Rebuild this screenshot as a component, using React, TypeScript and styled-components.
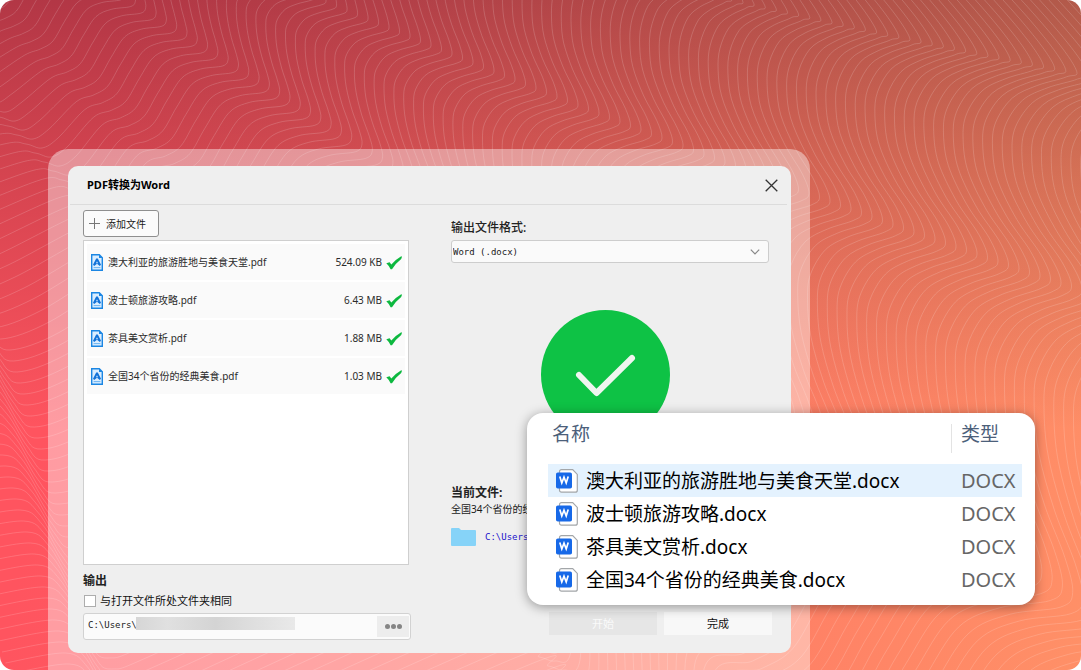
import React from 'react';
import styled, { createGlobalStyle, css } from 'styled-components';

const sans = `"Noto Sans", "Noto Sans CJK SC", sans-serif`;
const mono = `"DejaVu Sans Mono", "Noto Sans CJK SC", monospace`;

const GlobalStyle = createGlobalStyle`
  *, *::before, *::after { box-sizing: border-box; }
  body { margin: 0; background: #fff; font-family: ${sans}; color: #1a1a1a; }
  button, input, select { font: inherit; color: inherit; margin: 0; }
  h1, h2, p, ul { margin: 0; padding: 0; }
`;

const Stage = styled.main`
  position: relative;
  display: flex;
  min-height: 100vh;
  padding: 149px 271px 0 48px;
  border-radius: 14px;
  overflow: hidden;
  background:
    linear-gradient(180deg, rgba(36, 0, 22, 0.35) 0, rgba(36, 0, 16, 0.2) 165px, rgba(36, 0, 10, 0) 430px),
    linear-gradient(100deg, #ff545f 10%, #ff6062 32%, #ff7c65 68%, #ff9067 100%);
`;

const Waves = styled.svg`
  position: absolute;
  top: 0;
  left: 0;
  fill: none;
  stroke: #fff;
  stroke-opacity: 0.16;
`;

const Frame = styled.div`
  position: relative;
  flex: 1;
  padding: 17px 19px 17px 20px;
  border-radius: 20px 20px 0 0;
  background: rgba(255, 255, 255, 0.42);
`;

const Dialog = styled.section`
  border-radius: 10px;
  background: #efefef;
`;

const DialogHeader = styled.header`
  display: flex;
  align-items: center;
  justify-content: space-between;
  height: 39px;
  margin: 0 4px 0 2px;
  padding: 0 9px 0 17px;
  border-bottom: 1px solid #dcdcdc;
`;

const Title = styled.h1`
  font-size: 11px;
  line-height: 16px;
  font-weight: 700;
  color: #000;
`;

const IconButton = styled.button`
  display: flex;
  padding: 0;
  border: 0;
  background: none;
  color: #333;
`;

const DialogBody = styled.div`
  display: grid;
  grid-template-columns: 328px 1fr;
  column-gap: 40px;
  padding: 5px 19px 13px 15px;
`;

const Column = styled.div`
  display: flex;
  flex-direction: column;
`;

const AddButton = styled.button`
  display: flex;
  align-items: center;
  align-self: flex-start;
  gap: 5px;
  width: 76px;
  height: 27px;
  padding: 0 0 0 5px;
  border: 1px solid #8f8f8f;
  border-radius: 3px;
  background: #fbfbfb;
  font-size: 10px;
  white-space: nowrap;
`;

const FileList = styled.ul`
  display: flex;
  flex-direction: column;
  gap: 2px;
  min-height: 325px;
  margin: 3px 2px 0 0;
  padding: 3px;
  border: 1px solid #cfcfcf;
  background: #fff;
  list-style: none;
`;

const FileRow = styled.li`
  display: flex;
  align-items: center;
  height: 36px;
  padding: 0 3px 0 4px;
  background: #fafafa;
  font-size: 10px;
  line-height: 14px;
  color: #2b2b2b;
`;

const FileName = styled.span`
  flex: 1;
  padding-left: 5px;
`;

const FileSize = styled.span`
  padding-right: 4px;
`;

const Heading = styled.h2<{ $top: number }>`
  margin-top: ${(p) => p.$top}px;
  font-size: 12px;
  line-height: 16px;
  font-weight: 700;
  color: #222;
`;

const CheckLabel = styled.label`
  display: flex;
  align-items: center;
  gap: 4px;
  margin-top: 4px;
  padding-left: 1px;
  font-size: 11px;
  line-height: 16px;
  color: #111;
`;

const CheckBox = styled.input`
  appearance: none;
  width: 12px;
  height: 12px;
  border: 1px solid #adadad;
  background: #fff;
`;

const PathBox = styled.div`
  display: flex;
  align-items: center;
  height: 27px;
  margin-top: 4px;
  padding: 0 1px 0 4px;
  border: 1px solid #d2d2d2;
  border-radius: 3px;
  background: #fbfbfb;
`;

const PathInput = styled.input`
  width: 48px;
  height: 20px;
  padding: 0 0 4px;
  border: 0;
  outline: 0;
  background: none;
  font-family: ${mono};
  font-size: 9px;
`;

const Redaction = styled.span`
  flex: 0 0 159px;
  height: 13px;
  margin-bottom: 6px;
  background: linear-gradient(90deg, #d6d6d6, #e0e0e0 20%, #d4d4d4 50%, #dfdfdf 75%, #e9e9e9);
`;

const BrowseButton = styled.button`
  display: flex;
  align-items: center;
  justify-content: center;
  gap: 1px;
  width: 32px;
  height: 21px;
  margin-left: auto;
  padding: 0;
  border: 0;
  background: #ededed;
`;

const Dot = styled.i`
  width: 5px;
  height: 5px;
  border-radius: 50%;
  background: #858585;
`;

const FormatLabel = styled.label`
  margin-top: 10px;
  font-size: 12px;
  line-height: 16px;
  font-weight: 500;
  color: #222;
`;

const SelectWrap = styled.div`
  display: flex;
  align-items: center;
  margin: 4px 3px 0 0;
  border: 1px solid #cdcdcd;
  border-radius: 3px;
  background: #fafafa;
`;

const Select = styled.select`
  appearance: none;
  flex: 1;
  height: 21px;
  margin-right: -20px;
  padding: 0 20px 0 1px;
  border: 0;
  outline: 0;
  background: none;
  font-family: ${mono};
  font-size: 9px;
`;

const Chevron = styled.svg`
  flex: none;
  margin-right: 8px;
  pointer-events: none;
`;

const StatusMark = styled.svg`
  align-self: center;
  margin: 47px 12px 0 0;
`;

const CurrentFile = styled.p`
  font-size: 10px;
  line-height: 16px;
  white-space: nowrap;
`;

const FolderLine = styled.div`
  display: flex;
  align-items: center;
  gap: 9px;
  margin-top: 11px;
`;

const FolderLink = styled.a`
  font-family: ${mono};
  font-size: 9px;
  line-height: 16px;
  color: #1a12cc;
  text-decoration: none;
`;

const Actions = styled.div`
  display: flex;
  justify-content: flex-end;
  gap: 7px;
  margin: auto 0 5px;
`;

const ActionButton = styled.button`
  width: 108px;
  height: 23px;
  padding: 0;
  border: 0;
  background: #f8f8f8;
  font-size: 11px;
  line-height: 16px;
  color: #111;
  &:disabled {
    background: #e6e6e6;
    color: #fafafa;
  }
`;

const ResultCard = styled.section`
  position: absolute;
  top: 413px;
  right: 46px;
  width: 508px;
  padding: 0 13px 9px 21px;
  border-radius: 16px;
  background: #fff;
  box-shadow: 0 2px 12px rgba(0, 0, 0, 0.38);
`;

const ResultTable = styled.table`
  width: 100%;
  border-collapse: collapse;
  font-size: 19px;
`;

const HeadCell = styled.th<{ $divided?: boolean }>`
  height: 51px;
  padding: 11px 0 0;
  vertical-align: top;
  text-align: left;
  font-weight: 400;
  color: #4c607a;
  ${(p) => p.$divided && css`width: 71px;`}
`;

const HeadText = styled.span<{ $divided?: boolean }>`
  display: block;
  height: 29px;
  padding-left: ${(p) => (p.$divided ? 9 : 4)}px;
  border-left: ${(p) => (p.$divided ? '1px solid #e3e3e3' : '0')};
  line-height: 20px;
`;

const ResultRow = styled.tr<{ $active: boolean }>`
  height: 33px;
  background: ${(p) => (p.$active ? '#e4f2fe' : 'transparent')};
`;

const NameCell = styled.td`
  padding: 0 0 0 8px;
  color: #000;
`;

const NameInner = styled.div`
  display: flex;
  align-items: center;
  gap: 8px;
  line-height: 32px;
  white-space: nowrap;
`;

const TypeCell = styled.td`
  padding: 0 0 0 10px;
  font-size: 20px;
  line-height: 32px;
  color: #666;
`;

const files = [
  { name: '澳大利亚的旅游胜地与美食天堂', size: '524.09 KB' },
  { name: '波士顿旅游攻略', size: '6.43 MB' },
  { name: '茶具美文赏析', size: '1.88 MB' },
  { name: '全国34个省份的经典美食', size: '1.03 MB' },
];

type Point = [number, number];

// Fractions of the way from a crest back to the next hollow, and from a hollow down to a crest.
const crestToHollow: Point[] = [[0.11, 0.1], [0.46, 0.21], [0.76, 0.37], [0.96, 0.68]];
const hollowToCrest: Point[] = [[0.09, 0.25], [0.42, 0.55], [0.84, 0.82]];

const between = (a: Point, b: Point, steps: Point[]): Point[] =>
  steps.map(([x, y]) => [a[0] + (b[0] - a[0]) * x, a[1] + (b[1] - a[1]) * y]);

function contour(k: number): Point[] {
  const crestB: Point = [389 + 10.5 * k, 28 + 4.4 * k - 0.0066 * k * k];
  const hollowUp: Point = [
    crestB[0] - Math.max(8, 30 + 0.7 * (k - 23)),
    crestB[1] - Math.max(40, 92 + (k - 23)),
  ];
  const crestC: Point = [
    hollowUp[0] + Math.max(20, 63 + 1.35 * (k - 48)),
    hollowUp[1] - Math.max(50, 72 + 0.4 * (k - 48)),
  ];
  const hollowDown: Point = [
    crestB[0] - Math.max(20, 47 + 0.65 * (k - 4)),
    crestB[1] + Math.max(16, 43 + 0.85 * (k - 4)),
  ];
  const crestA: Point = [362 + 10.3 * k, 144 + 6.5 * k];
  const s = Math.max(0.7, 1 + (k + 17) / 60);
  const rel = (x: number, y: number): Point => [crestA[0] + x * s, crestA[1] + y * s];
  const n = k + 17;
  const dip: Point = [42 + 9 * n, 148 + 9 * n];
  const low: Point = [10 + (k < -2 ? 9 : 3.5) * (k + 2), 350 + 11 * (k + 2)];
  return [
    [crestC[0] - 120, crestC[1] - 140],
    [crestC[0] - 34, crestC[1] - 46],
    crestC,
    ...between(crestC, hollowUp, crestToHollow),
    hollowUp,
    ...between(hollowUp, crestB, hollowToCrest),
    crestB,
    ...between(crestB, hollowDown, crestToHollow),
    hollowDown,
    ...between(hollowDown, crestA, hollowToCrest),
    crestA,
    rel(-5, 6),
    rel(-26, 9),
    rel(-43, 17),
    rel(-57, 38),
    rel(-70, 60),
    rel(-84, 69),
    rel(-102, 76),
    [dip[0] + 16, dip[1] - 10],
    dip,
    [dip[0] - 16, dip[1] - 4],
    [dip[0] - 38, dip[1] - 4],
    [low[0] + 50, low[1] - 18],
    low,
    [low[0] - 18, low[1] - 14],
    [low[0] - 38, low[1] - 46],
    [low[0] - 60, low[1] - 60],
    [low[0] - 120, low[1] - 50],
  ];
}

function smooth(points: Point[]): string {
  const at = (i: number) => points[Math.max(0, Math.min(points.length - 1, i))];
  let d = `M${at(0)[0].toFixed(1)} ${at(0)[1].toFixed(1)}`;
  for (let i = 0; i < points.length - 1; i++) {
    const [p0, p1, p2, p3] = [at(i - 1), at(i), at(i + 1), at(i + 2)];
    const c = [
      p1[0] + (p2[0] - p0[0]) / 6,
      p1[1] + (p2[1] - p0[1]) / 6,
      p2[0] - (p3[0] - p1[0]) / 6,
      p2[1] - (p3[1] - p1[1]) / 6,
      p2[0],
      p2[1],
    ];
    d += `C${c.map((v) => v.toFixed(1)).join(' ')}`;
  }
  return d;
}

const contours = Array.from({ length: 150 }, (_, i) => smooth(contour(i - 45)));

const PdfIcon = () => (
  <svg width="12" height="17" viewBox="0 0 12 17" aria-hidden="true">
    <path d="M.7.7h7.6l3 3v12.6H.7z" fill="#d9edff" stroke="#1b86e3" strokeWidth="1.4" />
    <path d="M8 .5v3.6h3.5z" fill="#1b86e3" />
    <path d="M5.200 4.600h1.600L10 10.800 8.800 12 6 9.800 3.200 12 2 10.800z" fill="#1272d8" />
    <path d="M6 7.200 7 9.200H5z" fill="#d9edff" />
    <path d="M2.600 13.600h6.800" stroke="#6bb3f2" />
  </svg>
);

const DoneIcon = () => (
  <svg width="16" height="15" viewBox="0 0 16 15" aria-hidden="true">
    <path d="M.3 8.200 3.600 7.200 5.300 9.600Q9.600 4.400 15.200 1.200L16 1.800 15.200 4Q10 8 6 14.200L4.600 14.200Q3 10.600.3 8.200Z" fill="#0db83f" />
  </svg>
);

const WordIcon = () => (
  <svg width="22" height="24" viewBox="0 0 22 24" aria-hidden="true">
    <path d="M5.500.7h11.200l4.600 4.700v15.800a2 2 0 0 1-2 2H5.500a2 2 0 0 1-2-2V2.700a2 2 0 0 1 2-2z" fill="#fff" stroke="#a3a6a9" strokeWidth="1.200" />
    <rect y="3.500" width="16" height="16" rx="1.800" fill="#1769e8" />
    <path d="m3.800 7.500 2 6.500L8 8.200l2.200 5.800 2-6.500" fill="none" stroke="#fff" strokeWidth="1.700" />
  </svg>
);

export default function App() {
  return (
    <>
      <GlobalStyle />
      <Stage>
        <Waves width="100%" height="100%" aria-hidden="true">
          {contours.map((d, i) => (
            <path key={i} d={d} />
          ))}
        </Waves>
        <Frame>
          <Dialog>
            <DialogHeader>
              <Title>PDF转换为Word</Title>
              <IconButton aria-label="关闭">
                <svg width="13" height="13" viewBox="0 0 13 13" stroke="currentColor" strokeWidth="1.300">
                  <path d="m.7.7 11.600 11.600M12.300.7.7 12.300" />
                </svg>
              </IconButton>
            </DialogHeader>
            <DialogBody>
              <Column>
                <AddButton>
                  <svg width="12" height="12" viewBox="0 0 12 12" stroke="#777" aria-hidden="true">
                    <path d="M5.500 0v11M0 5.500h11" />
                  </svg>
                  添加文件
                </AddButton>
                <FileList>
                  {files.map((f) => (
                    <FileRow key={f.name}>
                      <PdfIcon />
                      <FileName>{f.name}.pdf</FileName>
                      <FileSize>{f.size}</FileSize>
                      <DoneIcon />
                    </FileRow>
                  ))}
                </FileList>
                <Heading $top={8}>输出</Heading>
                <CheckLabel>
                  <CheckBox type="checkbox" />
                  与打开文件所处文件夹相同
                </CheckLabel>
                <PathBox>
                  <PathInput aria-label="输出" defaultValue="C:\Users\" />
                  <Redaction />
                  <BrowseButton aria-label="浏览">
                    <Dot />
                    <Dot />
                    <Dot />
                  </BrowseButton>
                </PathBox>
              </Column>
              <Column>
                <FormatLabel htmlFor="format">输出文件格式:</FormatLabel>
                <SelectWrap>
                  <Select id="format">
                    <option>Word (.docx)</option>
                  </Select>
                  <Chevron width="10" height="6" viewBox="0 0 10 6" fill="none" stroke="#888" strokeWidth="1.200">
                    <path d="m.8.6 4.200 4.400L9.200.6" />
                  </Chevron>
                </SelectWrap>
                <StatusMark width="129" height="129" viewBox="0 0 129 129" aria-hidden="true">
                  <circle cx="64.500" cy="64.500" r="64.500" fill="#0ec245" />
                  <path d="m38 65 17.500 18L91 48" fill="none" stroke="#f0f5f0" strokeWidth="6" strokeLinecap="round" strokeLinejoin="round" />
                </StatusMark>
                <Heading $top={46}>当前文件:</Heading>
                <CurrentFile>{files[3].name}.pdf</CurrentFile>
                <FolderLine>
                  <svg width="25" height="18" viewBox="0 0 25 18" aria-hidden="true">
                    <path d="M1 0h7l2 2h14a1 1 0 0 1 1 1v14a1 1 0 0 1-1 1H1a1 1 0 0 1-1-1V1a1 1 0 0 1 1-1z" fill="#86d3f8" />
                  </svg>
                  <FolderLink href="#">C:\Users\</FolderLink>
                </FolderLine>
                <Actions>
                  <ActionButton disabled>开始</ActionButton>
                  <ActionButton>完成</ActionButton>
                </Actions>
              </Column>
            </DialogBody>
          </Dialog>
        </Frame>
        <ResultCard>
          <ResultTable>
            <thead>
              <tr>
                <HeadCell>
                  <HeadText>名称</HeadText>
                </HeadCell>
                <HeadCell $divided>
                  <HeadText $divided>类型</HeadText>
                </HeadCell>
              </tr>
            </thead>
            <tbody>
              {files.map((f, i) => (
                <ResultRow key={f.name} $active={i === 0}>
                  <NameCell>
                    <NameInner>
                      <WordIcon />
                      {f.name}.docx
                    </NameInner>
                  </NameCell>
                  <TypeCell>DOCX</TypeCell>
                </ResultRow>
              ))}
            </tbody>
          </ResultTable>
        </ResultCard>
      </Stage>
    </>
  );
}
